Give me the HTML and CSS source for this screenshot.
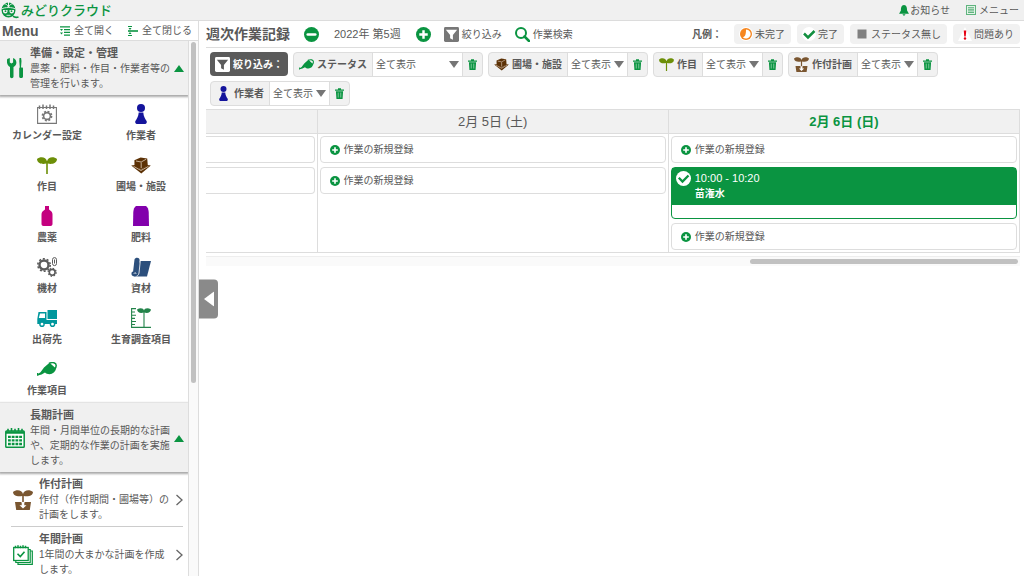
FILE: index.html
```html
<!DOCTYPE html>
<html lang="ja">
<head>
<meta charset="utf-8">
<title>週次作業記録 - みどりクラウド</title>
<link rel="stylesheet" href="styles.css">
</head>
<body>
<svg class="sprite" aria-hidden="true">
  <symbol id="trash" viewBox="0 0 10 12"><path d="M0 1.500h3.300V.3h3.400v1.200H10V3H0zM1 3.600h8L8.400 12H1.600z" fill="#0a9441"/><path d="M3.600 5v5.500M6.400 5v5.500" stroke="#a9dcbc" stroke-width=".8"/></symbol>
  <symbol id="down" viewBox="0 0 10 7"><path d="M0 0h10L5 7z" fill="#757575"/></symbol>
  <symbol id="plus" viewBox="0 0 16 16"><circle cx="8" cy="8" r="8" fill="#0a9441"/><path d="M8 3.500v9M3.500 8h9" stroke="#fff" stroke-width="2.600"/></symbol>
  <symbol id="minus" viewBox="0 0 16 16"><circle cx="8" cy="8" r="8" fill="#0a9441"/><path d="M4 8h8" stroke="#fff" stroke-width="2.800" stroke-linecap="round"/></symbol>
  <symbol id="can" viewBox="0 0 20 14"><path d="M7 5.500 12.500.8 19 6.500C18.500 9.500 16 12 12.500 12.200 10.500 12.200 9 11.500 8 10.500L4.600 12.400 1 13.400.3 12.200 3.500 10.200z" fill="#0a9441"/><path d="M12 1.500C15.500-.3 19.300.8 19.200 3.600c0 1.500-.6 2.600-1.500 3.400" fill="none" stroke="#0a9441" stroke-width="1.500"/><path d="M.6 11v2.700" stroke="#0a9441" stroke-width="1.200"/></symbol>
  <symbol id="person" viewBox="0 0 12 20"><circle cx="6" cy="4" r="4" fill="#14149c"/><path d="M3.700 8.600h4.600c.3 4 1.700 6 3.300 8.400.5 1.500 0 3-1.400 3H1.800c-1.400 0-1.900-1.500-1.400-3C2 14.600 3.400 12.600 3.700 8.600z" fill="#14149c"/></symbol>
  <symbol id="sprout" viewBox="0 0 20 17"><path d="M9.200 17V6.600C5 7.600.2 6.500 0 2 3-.7 9-.5 10 4.200 11-.5 17-.7 20 2c-.2 4.500-5 5.600-9.200 4.600V17z" fill="#6d8f08"/></symbol>
  <symbol id="field" viewBox="0 0 20 17"><path d="M.2 8.600 3.600 8l6.400 4.600L16.500 8l3.300.6L10.300 16.600z" fill="#5c3105"/><path d="M3.400 3.200 9.600.4 16.200 1.500l.6 7L10 12.500 3.500 9z" fill="#5c3105"/><path d="M5 4 10.200 5l5-2.800M10.200 5.500v5.700M2.500 9.300 10 13.500l7.500-4.200" fill="none" stroke="#e0cfbd" stroke-width=".8"/></symbol>
  <symbol id="potted" viewBox="0 0 20 20"><path d="M9.200 12V6C5 7 .2 6 0 2 3-.7 9-.5 10 4c1-4.500 7-4.700 10-2-.2 4-5 5-9.200 4v6z" fill="#7a5630"/><path d="M2 12h6.500v1h3v-1H18l-1.200 8H3.200z" fill="#7a5630"/><path d="M8.700 13h2.600v2.200h2.200L10 18.500 6.500 15.200h2.200z" fill="#fff"/></symbol>
  <symbol id="funnel" viewBox="0 0 16 16"><rect width="16" height="16" rx="1.500" fill="#777"/><path d="M2 3h12L9.500 8.400V13.600L6.500 12V8.400z" fill="#fff"/></symbol>
  <symbol id="up" viewBox="0 0 10 7"><path d="M5 0l5 7H0z" fill="#0a9441"/></symbol>
  <symbol id="next" viewBox="0 0 8 12"><path d="M1.500 1 7 6l-5.500 5" fill="none" stroke="#666" stroke-width="1.300"/></symbol>
</svg>

<header class="topbar">
  <a class="brand" href="#">
    <svg width="18" height="18" viewBox="0 0 18 18"><ellipse cx="7.500" cy="9" rx="7" ry="7.600" fill="#0a9441"/><path d="M7.500 6.300C6 3 4 2.500 2.500 3M7.500 6.300C9 3 11 2.500 12.500 3M7.500 1v5" fill="none" stroke="#f0f0f0" stroke-width="1"/><path d="M.5 8C4 6 11 6 14.500 8" fill="none" stroke="#f0f0f0" stroke-width=".9"/><path d="M2 9h4.500v1.500C6.500 13 2.200 13 2 10.500zM8.500 9H13v1.500c-.2 2.500-4.500 2.500-4.500 0z" fill="#f0f0f0"/><circle cx="4.500" cy="10.200" r=".9" fill="#0a9441"/><circle cx="10.500" cy="10.200" r=".9" fill="#0a9441"/><path d="M5.500 14.300h4" stroke="#f0f0f0" stroke-width=".9"/><path d="M12 15.200c2 1.800 4 1.300 5.500.8" fill="none" stroke="#0a9441" stroke-width="1.800"/></svg>
    <span>みどりクラウド</span>
  </a>
  <nav class="toplinks">
    <a href="#"><svg width="10" height="11" viewBox="0 0 9 10"><path d="M4.500 0C7 .3 7.300 2.500 7.300 5L9 8H0l1.700-3C1.700 2.500 2 .3 4.500 0zM3 8.500h3L4.500 10z" fill="#0a9441"/></svg>お知らせ</a>
    <a href="#" class="menu-link"><svg width="10" height="10" viewBox="0 0 10 10"><rect x=".5" y=".5" width="9" height="9" fill="#e4f2e8" stroke="#5fb47e"/><path d="M2 2.700h6M2 4.300h6M2 5.900h6M2 7.500h6" stroke="#5fb47e"/></svg>メニュー</a>
  </nav>
</header>

<div class="layout">
  <aside class="sidebar">
    <div class="side-head">
      <h2>Menu</h2>
      <button type="button"><svg width="10" height="10" viewBox="0 0 10 10"><path d="M0 .8h10M4 3.600h6M4 6.400h6M4 9.200h6" stroke="#0a9441" stroke-width="1.300"/><path d="M0 3h3L1.500 5zM0 6.400h3l-1.500 2z" fill="#0a9441"/></svg>全て開く</button>
      <button type="button"><svg width="10" height="10" viewBox="0 0 10 10"><path d="M0 5h10" stroke="#0a9441" stroke-width="1.600"/><path d="M0 .5h4M0 9.500h4" stroke="#0a9441"/><path d="M.5 2h3L2 4zM.5 8h3L2 6z" fill="#0a9441"/></svg>全て閉じる</button>
    </div>
    <div class="side-body">
      <div class="side-scroll">
        <button type="button" class="section">
          <svg class="section-icon" width="16" height="21" viewBox="0 0 16 21"><path d="M.3 1 2.800 0v4.500l1.600 1 1.700-1V0C8.500 1 9.700 3 9.300 5.500 9 7.500 7.500 8.500 6.500 9v9.500c0 2.300-3.500 2.300-3.500 0V9C.5 8 -.8 4 .3 1z" fill="#0a9441"/><path d="M12.500 0h1.600l.4 3-.5 6.500h1.200c.5 0 .8.500.8 1v8c0 2-3.800 2-3.800 0v-8c0-.5.200-1 .6-1L12.300 3z" fill="#0a9441"/></svg>
          <span class="section-text"><strong>準備・設定・管理</strong><span>農薬・肥料・作目・作業者等の管理を行います。</span></span>
          <svg width="10" height="7"><use href="#up"/></svg>
        </button>
        <nav class="tiles">
          <a href="#"><svg width="20" height="20" viewBox="0 0 20 20"><path d="M.6 3.500h18.800v15.900H.6z" fill="none" stroke="#777" stroke-width="1.100"/><path d="M2.500 5V1.500M6 5V.5M9.500 5V1.500M13 5V.5M16.500 5V1.500" stroke="#777" stroke-width="1.500"/><circle cx="10" cy="12" r="4.600" fill="none" stroke="#777" stroke-width="1.600" stroke-dasharray="2 1.610"/><circle cx="10" cy="12" r="3.400" fill="none" stroke="#777" stroke-width="1.600"/></svg>カレンダー設定</a>
          <a href="#"><svg width="12" height="20"><use href="#person"/></svg>作業者</a>
          <a href="#"><svg width="20" height="17"><use href="#sprout"/></svg>作目</a>
          <a href="#"><svg width="20" height="17"><use href="#field"/></svg>圃場・施設</a>
          <a href="#"><svg width="12" height="20" viewBox="0 0 12 20"><path d="M4 0h4v3.500C10.500 5 11.500 6.500 11.500 8.500V18c0 1.300-.8 2-2 2h-7c-1.200 0-2-.7-2-2V8.500C.5 6.500 1.500 5 4 3.500z" fill="#c4007f"/></svg>農薬</a>
          <a href="#"><svg width="18" height="20" viewBox="0 0 18 20"><path d="M4 0h10c1.500 1 2.500 3 2.700 6L17 20H1l.3-14C1.500 3 2.500 1 4 0z" fill="#8200ac"/></svg>肥料</a>
          <a href="#"><svg width="20" height="20" viewBox="0 0 20 20" fill="none" stroke="#5b5b5b"><circle cx="7" cy="8" r="4.500" stroke-width="2.400"/><circle cx="7" cy="8" r="6.200" stroke-width="1.600" stroke-dasharray="2 1.900"/><circle cx="15.200" cy="15.300" r="2.900" stroke-width="1.600"/><circle cx="15.200" cy="15.300" r="4" stroke-width="1.200" stroke-dasharray="1.500 1.640"/><rect x="15.500" y=".6" width="4" height="8" rx="2"/><path d="M17.500 2.500v4"/></svg>機材</a>
          <a href="#"><svg width="20" height="20" viewBox="0 0 20 20"><path d="M9 4h11L16 19.500H3z" fill="#2c4f7c"/><path d="M3.500 2.500C4 .2 8.500-.2 8.600 3L7.500 16c-.3 3.500-6.500 4.500-7 1.200-.2-1.700.6-2.500 1.600-2.600z" fill="#2c4f7c"/><path d="M9.300 4 8 16c-.3 2-1.500 3-2.500 3.200M3 16.800c.3-1.500 2.200-1.400 2 .2" fill="none" stroke="#fff" stroke-width=".8"/></svg>資材</a>
          <a href="#"><svg width="20" height="17" viewBox="0 0 20 17"><path d="M10.500 0H20v9h-9.500zM1.500 2h8v8H20v4H.3V9z" fill="#00979c"/><path d="M3 3.500h5V8H1.800z" fill="#fff"/><g fill="#fff" stroke="#00979c" stroke-width="1.400"><circle cx="5" cy="14.200" r="2.100"/><circle cx="15.500" cy="14.200" r="2.100"/></g></svg>出荷先</a>
          <a href="#"><svg width="20" height="20" viewBox="0 0 20 20"><path d="M5 .6H.6v18.800H20M.6 4H4M.6 7.200h4.400M.6 10.400H4M.6 13.500h4.400M.6 16.500H4M13 19V4" fill="none" stroke="#23834a" stroke-width="1.100"/><path d="M13 4.500C9 5.500 6.500 4.500 6 1.500 9-.5 12.500 0 13 2.500 13.500 0 17-.5 20 1.500c-.5 3-3 4-7 3z" fill="#23834a"/></svg>生育調査項目</a>
          <a href="#"><svg width="20" height="14"><use href="#can"/></svg>作業項目</a>
        </nav>
        <button type="button" class="section">
          <svg class="section-icon" width="20" height="20" viewBox="0 0 20 20"><rect x=".8" y="3" width="18.400" height="16.200" rx=".8" fill="#fff" stroke="#0a9441" stroke-width="1.500"/><path d="M1 4.500h18" stroke="#0a9441" stroke-width="2.500"/><path d="M3 3V.8M6.500 3V0M10 3V.8M13.500 3V0M17 3V.8" stroke="#0a9441" stroke-width="1.600"/><path d="M3 8.800h14M3 12.400h14M3 16h14" stroke="#0a9441" stroke-width="2.300" stroke-dasharray="2.800 .93"/></svg>
          <span class="section-text"><strong>長期計画</strong><span>年間・月間単位の長期的な計画や、定期的な作業の計画を実施します。</span></span>
          <svg width="10" height="7"><use href="#up"/></svg>
        </button>
        <nav class="plans">
          <a href="#"><svg class="plan-icon" width="20" height="20"><use href="#potted"/></svg>
            <span class="plan-text"><strong>作付計画</strong><span>作付（作付期間・圃場等）の計画をします。</span></span>
            <svg width="8" height="12"><use href="#next"/></svg></a>
          <a href="#"><svg class="plan-icon" width="20" height="20" viewBox="0 0 20 20" stroke="#0a9441" fill="#fff" stroke-width="1.200"><path d="M5 6h14.300v13.300H5z"/><path d="M2.800 4.500h14.400v13H2.800z"/><rect x=".7" y="2.500" width="14.500" height="13" stroke-width="1.300"/><path d="M2.500 3.200V.8M5 3.200V.2M7.500 3.200V.8M10 3.200V.2M12.500 3.200V.8" stroke-width="1.500"/><path d="M4.500 8.700 7.300 11.500l4.200-4.800" fill="none" stroke-width="1.600"/></svg>
            <span class="plan-text"><strong>年間計画</strong><span>1年間の大まかな計画を作成します。</span></span>
            <svg width="8" height="12"><use href="#next"/></svg></a>
        </nav>
      </div>
      <div class="v-track"><div class="v-thumb"></div></div>
    </div>
  </aside>

  <main class="main">
    <button type="button" class="collapse" aria-label="メニューを閉じる"><svg width="10" height="15" viewBox="0 0 10 15"><path d="M10 0v15L0 7.500z" fill="#fff"/></svg></button>
    <div class="toolbar">
      <h1>週次作業記録</h1>
      <div class="week">
        <button type="button" aria-label="前の週"><svg width="15" height="15"><use href="#minus"/></svg></button>
        <span>2022年 第5週</span>
        <button type="button" aria-label="次の週"><svg width="15" height="15"><use href="#plus"/></svg></button>
      </div>
      <button type="button" class="tool"><svg width="15" height="15"><use href="#funnel"/></svg>絞り込み</button>
      <button type="button" class="tool search"><svg width="15" height="15" viewBox="0 0 15 15"><circle cx="6" cy="6" r="5" fill="none" stroke="#0a9441" stroke-width="2"/><path d="M9.500 9.500 14 14" stroke="#0a9441" stroke-width="2.500" stroke-linecap="round"/></svg>作業検索</button>
      <div class="legend">
        <span class="legend-title">凡例：</span>
        <span class="chip"><svg width="14" height="14" viewBox="0 0 14 14"><circle cx="7" cy="7" r="7" fill="#fff"/><circle cx="7" cy="7" r="6" fill="#f6861f"/><path d="M7 2.400A4.600 4.600 0 1 1 3.800 10.300C6 9.500 7 8 7 2.400z" fill="#fff"/></svg>未完了</span>
        <span class="chip"><svg width="14" height="14" viewBox="0 0 14 14"><circle cx="7" cy="7" r="7" fill="#fff"/><path d="m2 6.500 4 4 6.500-6.500" fill="none" stroke="#128f3f" stroke-width="2.500"/></svg>完了</span>
        <span class="chip"><svg width="14" height="14" viewBox="0 0 14 14"><path d="M2.500 2.500h9v9h-9z" fill="#808080"/></svg>ステータス無し</span>
        <span class="chip"><svg width="14" height="14" viewBox="0 0 14 14"><path d="m7 0 7 14H0z" fill="#fff"/><path d="M5.700 3.500h2.600L7.700 9.500H6.300z" fill="#e60012"/><circle cx="7" cy="11.500" r="1.200" fill="#e60012"/></svg>問題あり</span>
      </div>
    </div>

    <form class="filters">
      <button type="button" class="filter-main"><svg width="15" height="15" viewBox="0 0 16 16"><rect width="16" height="16" rx="1.500" fill="#fff"/><path d="M2 3h12L9.500 8.400V13.600L6.500 12V8.400z" fill="#5b5b5b"/></svg>絞り込み：</button>
      <div class="filter">
        <label for="f-status"><svg width="15" height="11"><use href="#can"/></svg>ステータス</label>
        <span class="pick wide"><select id="f-status"><option>全て表示</option></select><svg width="10" height="7"><use href="#down"/></svg></span>
        <button type="button" aria-label="ステータスを削除"><svg width="9" height="11"><use href="#trash"/></svg></button>
      </div>
      <div class="filter">
        <label for="f-field"><svg width="15" height="13"><use href="#field"/></svg>圃場・施設</label>
        <span class="pick"><select id="f-field"><option>全て表示</option></select><svg width="10" height="7"><use href="#down"/></svg></span>
        <button type="button" aria-label="圃場・施設を削除"><svg width="9" height="11"><use href="#trash"/></svg></button>
      </div>
      <div class="filter">
        <label for="f-crop"><svg width="15" height="13"><use href="#sprout"/></svg>作目</label>
        <span class="pick"><select id="f-crop"><option>全て表示</option></select><svg width="10" height="7"><use href="#down"/></svg></span>
        <button type="button" aria-label="作目を削除"><svg width="9" height="11"><use href="#trash"/></svg></button>
      </div>
      <div class="filter">
        <label for="f-plan"><svg width="15" height="15"><use href="#potted"/></svg>作付計画</label>
        <span class="pick"><select id="f-plan"><option>全て表示</option></select><svg width="10" height="7"><use href="#down"/></svg></span>
        <button type="button" aria-label="作付計画を削除"><svg width="9" height="11"><use href="#trash"/></svg></button>
      </div>
      <div class="filter">
        <label for="f-worker"><svg width="15" height="15"><use href="#person"/></svg>作業者</label>
        <span class="pick"><select id="f-worker"><option>全て表示</option></select><svg width="10" height="7"><use href="#down"/></svg></span>
        <button type="button" aria-label="作業者を削除"><svg width="9" height="11"><use href="#trash"/></svg></button>
      </div>
    </form>

    <table class="week-table">
      <colgroup><col class="col-cut"><col><col></colgroup>
      <thead><tr><th></th><th>2月 5日 (土)</th><th class="today">2月 6日 (日)</th></tr></thead>
      <tbody><tr>
        <td class="cut"><div class="cards"><button type="button" class="add" aria-label="作業の新規登録"></button><button type="button" class="add" aria-label="作業の新規登録"></button></div></td>
        <td><div class="cards">
          <button type="button" class="add"><svg width="10" height="10"><use href="#plus"/></svg>作業の新規登録</button>
          <button type="button" class="add"><svg width="10" height="10"><use href="#plus"/></svg>作業の新規登録</button>
        </div></td>
        <td><div class="cards">
          <button type="button" class="add"><svg width="10" height="10"><use href="#plus"/></svg>作業の新規登録</button>
          <a href="#" class="task">
            <span class="task-head"><svg width="15" height="15" viewBox="0 0 15 15"><circle cx="7.500" cy="7.500" r="7.500" fill="#fff"/><path d="m2.800 6.800 3.700 3.700 6-6" fill="none" stroke="#0a9441" stroke-width="2.300"/></svg>
            <span><span class="task-time">10:00 - 10:20</span><strong>苗潅水</strong></span></span>
          </a>
          <button type="button" class="add"><svg width="10" height="10"><use href="#plus"/></svg>作業の新規登録</button>
        </div></td>
      </tr></tbody>
    </table>
    <div class="h-track"><div class="h-thumb"></div></div>
  </main>
</div>
</body>
</html>
```

FILE: styles.css
```css
* { box-sizing: border-box; }
body {
  margin: 0;
  height: 100vh;
  display: flex;
  flex-direction: column;
  overflow: hidden;
  background: #fff;
  color: #595959;
  font: 10px/15px "Liberation Sans", "Noto Sans CJK JP", sans-serif;
}
.sprite { display: none; }
svg { flex: none; display: block; }
a { color: inherit; text-decoration: none; }
button, select { font: inherit; color: inherit; border: 0; padding: 0; background: none; margin: 0; }
h1, h2 { margin: 0; }

.topbar {
  flex: none;
  display: flex;
  justify-content: space-between;
  height: 21px;
  padding: 0 5px 0 1px;
  background: #f0f0f0;
  border-bottom: 1px solid #dcdcdc;
}
.brand { display: flex; align-items: center; gap: 2px; color: #0a9441; font-size: 13px; font-weight: 500; }
.toplinks { display: flex; align-items: center; gap: 16px; }
.toplinks a { display: flex; align-items: center; gap: 1px; }
.toplinks .menu-link { gap: 3px; }

.layout { flex: 1; min-height: 0; display: flex; }

.sidebar { flex: none; width: 199px; display: flex; flex-direction: column; border-right: 1px solid #ddd; }
.side-head {
  flex: none;
  display: flex;
  align-items: center;
  height: 20px;
  padding: 0 6px 0 2px;
  gap: 14px;
  border-bottom: 1px solid #ddd;
}
.side-head h2 { flex: 1; font-size: 14px; line-height: 18px; }
.side-head button { display: flex; align-items: center; gap: 4px; }
.side-body { flex: 1; min-height: 0; display: flex; }
.side-scroll { flex: 1; min-width: 0; overflow: hidden; border-right: 1px solid #ddd; }
.v-track { flex: none; width: 9px; padding: 1px 2px; background: #fafafa; }
.v-thumb { width: 5px; height: 64%; border-radius: 3px; background: #c1c1c1; }

.section {
  display: flex;
  align-items: center;
  width: 100%;
  padding: 5px 4px 4px;
  text-align: left;
  background: #f0f0f0;
  box-shadow: 0 1px 2px 1px #aaa;
  position: relative;
}
.section-icon { margin: 0 auto; }
.section-text { width: 144px; flex: none; display: flex; flex-direction: column; margin-left: 5px; }
.section-text span { width: 140px; }
.section strong, .plans strong { font-size: 11px; }
.tiles { display: grid; grid-template-columns: 1fr 1fr; padding-bottom: 2px; }
.tiles a {
  display: grid;
  grid-template-rows: 20px 15px;
  row-gap: 4px;
  justify-items: center;
  align-items: center;
  height: 51px;
  padding-top: 9px;
  font-weight: bold;
}
.plans { padding: 0 5px 0 11px; }
.plans a { display: flex; align-items: center; padding: 5px 0 4px; border-bottom: 1px solid #ccc; }
.plan-icon { margin: 0 6px 0 2px; }
.plan-text { flex: 1; display: flex; flex-direction: column; }
.plan-text span { width: 130px; }

.main { flex: 1; min-width: 0; position: relative; padding: 0 4px 0 7px; }
.collapse {
  position: absolute;
  left: 0;
  top: 50%;
  transform: translateY(-50%);
  width: 19px;
  height: 39px;
  padding-left: 5px;
  background: #8a8a8a;
  border-radius: 0 4px 4px 0;
}
.toolbar { display: flex; align-items: center; height: 27px; border-bottom: 1px solid #ddd; }
.toolbar h1 { font-size: 14px; line-height: 20px; }
.week { display: flex; align-items: center; gap: 15px; margin: 0 13px 0 14px; font-size: 11px; }
.tool { display: flex; align-items: center; gap: 3px; }
.tool.search { margin-left: 13px; }
.legend { margin-left: auto; display: flex; align-items: center; gap: 6px; }
.legend-title { font-weight: bold; margin-right: 6px; }
.chip { display: flex; align-items: center; gap: 2px; height: 20px; padding: 0 6px 0 5px; border-radius: 4px; background: #f1f1f1; }

.filters { display: flex; flex-wrap: wrap; gap: 4px 5px; padding: 4px 4px 3px; }
.filter-main {
  display: flex;
  align-items: center;
  gap: 3px;
  height: 24px;
  padding: 0 5px;
  border-radius: 4px;
  background: #5b5b5b;
  color: #fff;
  font-weight: bold;
}
.filter { display: flex; height: 25px; border: 1px solid #ddd; border-radius: 4px; background: #f1f1f1; overflow: hidden; }
.filter label { display: flex; align-items: center; gap: 3px; padding: 0 5px; font-weight: bold; }
.pick { position: relative; width: 61px; background: #fff; border: 1px solid #ddd; border-width: 0 1px; }
.pick.wide { width: 91px; }
.pick select { appearance: none; width: 100%; height: 100%; padding: 0 3px; }
.pick svg { position: absolute; right: 3px; top: 8px; pointer-events: none; }
.filter button { width: 19px; display: flex; align-items: center; justify-content: center; }

.week-table { width: 100%; table-layout: fixed; border-collapse: collapse; border-bottom: 1px solid #ddd; }
.col-cut { width: 111px; }
.week-table th { height: 24px; padding: 0; background: #f1f1f1; border: 1px solid #ddd; font-size: 13px; font-weight: normal; }
.week-table .today { color: #0a9441; font-weight: bold; }
.week-table td { height: 119px; padding: 2px; vertical-align: top; border: 1px solid #ddd; }
.week-table th:first-child, .week-table .cut { border-left: 0; padding-left: 0; }
.cards { display: flex; flex-direction: column; gap: 4px; }
.add {
  display: flex;
  align-items: center;
  gap: 4px;
  height: 27px;
  padding-left: 9px;
  border: 1px solid #ddd;
  border-radius: 4px;
  background: #fff;
}
.cut .add { border-left: 0; border-radius: 0 4px 4px 0; }
.task { border: 1px solid #0a9441; border-radius: 4px; padding-bottom: 13px; }
.task-head { display: flex; gap: 4px; padding: 3px 4px 4px; background: #0a9441; color: #fff; }
.task-head > span { display: flex; flex-direction: column; }
.task-time { font-size: 11px; }
.h-track { display: flex; justify-content: flex-end; height: 10px; margin-top: 3px; padding: 2px 2px 0 0; background: #fafafa; border-top: 1px solid #eee; }
.h-thumb { width: 33%; height: 5px; border-radius: 3px; background: #c1c1c1; }
```
